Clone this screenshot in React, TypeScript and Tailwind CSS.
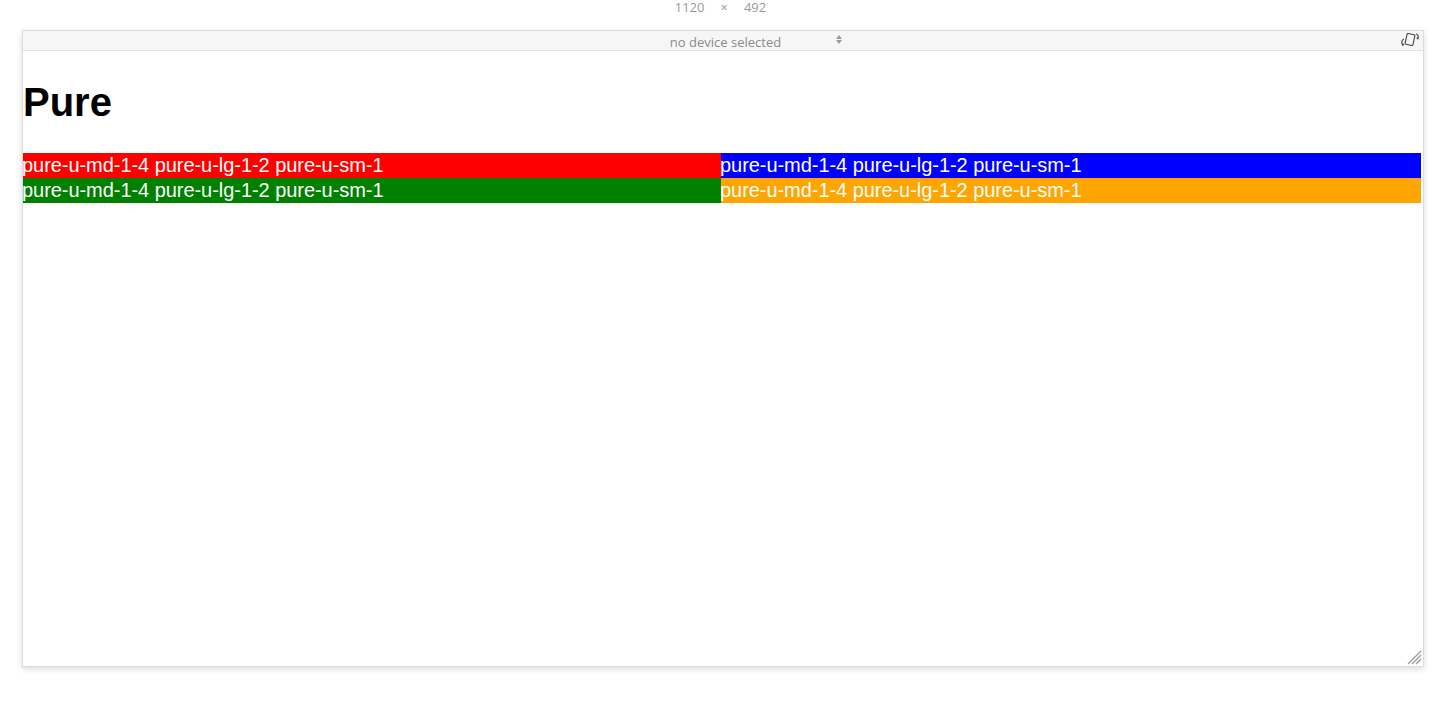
const cls = "pure-u-md-1-4 pure-u-lg-1-2 pure-u-sm-1"

const Cell = ({ bg, w }: { bg: string; w: string }) => (
    <div className={`h-[25px] leading-[25px] text-white text-[20px] tracking-[-0.05px] whitespace-nowrap -indent-[1px] ${w} ${bg}`}>{cls}</div>
)

const RotateIcon = () => (
    <svg width="22" height="16" viewBox="0 0 22 16" fill="none" stroke="#444" strokeWidth="1.1">
        <rect x="7" y="2" width="8" height="11" rx="1" transform="rotate(12 11 7.5)" />
        <path d="M5 7 C2.5 8 2 11 4 13" />
        <path d="M3 13 L4.2 13.2 L4.4 11.9" />
        <path d="M17 2 C19.5 2.5 20 5 18.5 6.5" />
        <path d="M19.5 6.6 L18.3 6.6 L18.4 5.3" />
    </svg>
)

const Grip = () => (
    <svg width="16" height="16" viewBox="0 0 16 16" stroke="#999" strokeWidth="1.3">
        <line x1="2" y1="15" x2="15" y2="2" />
        <line x1="6" y1="15" x2="15" y2="6" />
        <line x1="10" y1="15" x2="15" y2="10" />
    </svg>
)

export default function App() {
    return (
        <div className="w-[1455px] h-[707px] bg-white relative" style={{ fontFamily: "'Liberation Sans', Arial, sans-serif" }}>
            <div className="h-[15px] flex justify-center pr-[14px] text-[13px] leading-[15px] text-[#9a9a9a] gap-[16px]" style={{ fontFamily: "'Open Sans', 'DejaVu Sans', sans-serif" }}>
                <span>1120</span>
                <span>×</span>
                <span>492</span>
            </div>
            <div className="ml-[22px] mt-[15px] w-[1402px] h-[637px] border border-[#dcdcdc] shadow-[0_2px_6px_rgba(0,0,0,0.15)] flex flex-col">
                <div className="h-[20px] shrink-0 bg-[#f6f6f6] border-b border-[#e2e2e2] relative flex items-center justify-center">
                    <span className="text-[13px] text-[#8a8a8a] leading-[19px] ml-[5px] mt-[3px]" style={{ fontFamily: "'Open Sans', 'DejaVu Sans', sans-serif" }}>no device selected</span>
                    <span className="absolute left-[813px] top-[4px] flex flex-col items-center gap-[1px]">
                        <span className="w-0 h-0 border-l-[3px] border-r-[3px] border-b-[4px] border-l-transparent border-r-transparent border-b-[#999]" />
                        <span className="w-0 h-0 border-l-[3px] border-r-[3px] border-t-[4px] border-l-transparent border-r-transparent border-t-[#999]" />
                    </span>
                    <span className="absolute right-[2px] top-[1px]"><RotateIcon /></span>
                </div>
                <div className="flex-1 relative bg-white">
                    <h1 className="text-[40px] font-bold leading-[46px] mt-[28px] mb-[28px] text-black">Pure</h1>
                    <div className="flex">
                        <Cell bg="bg-[#ff0000]" w="w-[698px]" />
                        <Cell bg="bg-[#0000ff]" w="w-[700px]" />
                    </div>
                    <div className="flex">
                        <Cell bg="bg-[#008000]" w="w-[698px]" />
                        <Cell bg="bg-[#ffa500]" w="w-[700px]" />
                    </div>
                    <span className="absolute right-[1px] bottom-[1px]"><Grip /></span>
                </div>
            </div>
        </div>
    )
}
